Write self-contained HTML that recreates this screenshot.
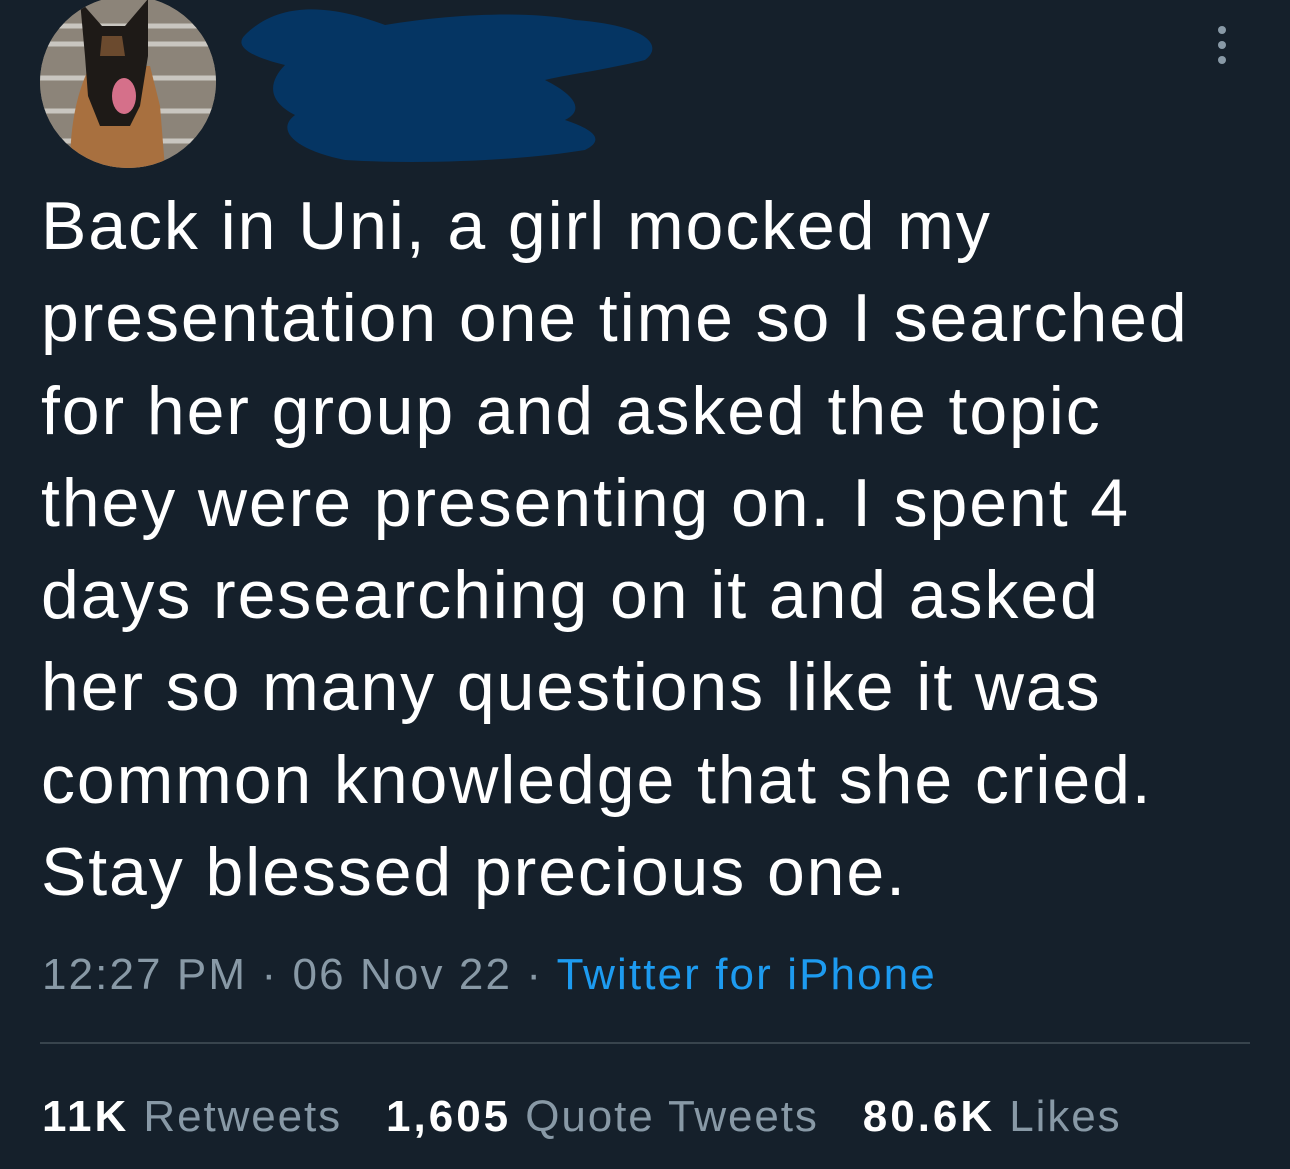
<!DOCTYPE html>
<html><head><meta charset="utf-8"><style>
html,body{margin:0;padding:0;background:#15202b;width:1290px;height:1169px;overflow:hidden;font-family:"Liberation Sans",sans-serif;}
.av{position:absolute;left:40px;top:-4px;width:176px;height:172px;border-radius:50%;overflow:hidden;background:#8a8278;}
.txt{position:absolute;left:41px;top:180px;color:#fff;font-size:68px;line-height:92.3px;white-space:nowrap;letter-spacing:1.9px}
.meta{position:absolute;left:42px;top:950px;font-size:44px;color:#8899a6;letter-spacing:2.1px;white-space:nowrap}
.meta a{color:#1d9bf0;text-decoration:none}
.hr{position:absolute;left:40px;top:1042px;width:1210px;height:2px;background:#38444d}
.st{position:absolute;left:42px;top:1092px;font-size:44px;color:#8899a6;letter-spacing:1.9px;white-space:nowrap}
.st b{color:#fff;letter-spacing:3px}
.g{display:inline-block;width:44px}
.dot{position:absolute;left:1218px;width:8px;height:8px;border-radius:50%;background:#8899a6}
</style></head><body>
<div class="av"><svg width="176" height="172" viewBox="0 0 176 172">
<rect width="176" height="172" fill="#8c8479"/>
<g stroke="#c9c6c0" stroke-width="5"><line x1="0" y1="30" x2="176" y2="30"/><line x1="0" y1="48" x2="176" y2="48"/><line x1="0" y1="82" x2="176" y2="82"/><line x1="0" y1="115" x2="176" y2="115"/><line x1="0" y1="145" x2="176" y2="145"/></g>
<path d="M30 172 C30 120 40 90 50 70 L60 70 L110 70 L120 110 L125 172Z" fill="#a8703f"/>
<path d="M45 60 L40 5 L62 30 L85 30 L108 3 L108 60 L100 110 L90 130 L60 130 L48 100Z" fill="#1e1a17"/>
<path d="M62 40 L82 40 L85 60 L60 60Z" fill="#6b4a2e"/>
<ellipse cx="84" cy="100" rx="12" ry="18" fill="#d5708a"/>
</svg></div>
<svg style="position:absolute;left:225px;top:0" width="445" height="175"><path d="M20 35 C60 -5 120 10 160 25 C220 15 300 10 350 20 C420 25 440 45 420 60 C380 70 340 75 320 80 C350 95 360 110 340 120 C370 130 380 140 360 150 C300 160 200 165 120 160 C70 150 50 130 70 115 C40 100 45 80 60 65 C20 55 10 45 20 35Z" fill="#053563"/></svg>
<div class="dot" style="top:26px"></div><div class="dot" style="top:41px"></div><div class="dot" style="top:56px"></div>
<div class="txt">Back in Uni, a girl mocked my<br>presentation one time so I searched<br>for her group and asked the topic<br>they were presenting on. I spent 4<br>days researching on it and asked<br>her so many questions like it was<br>common knowledge that she cried.<br>Stay blessed precious one.</div>
<div class="meta">12:27 PM · 06 Nov 22 · <a>Twitter for iPhone</a></div>
<div class="hr"></div>
<div class="st"><b>11K</b> Retweets<span class="g"></span><b>1,605</b> Quote Tweets<span class="g"></span><b>80.6K</b> Likes</div>
</body></html>
